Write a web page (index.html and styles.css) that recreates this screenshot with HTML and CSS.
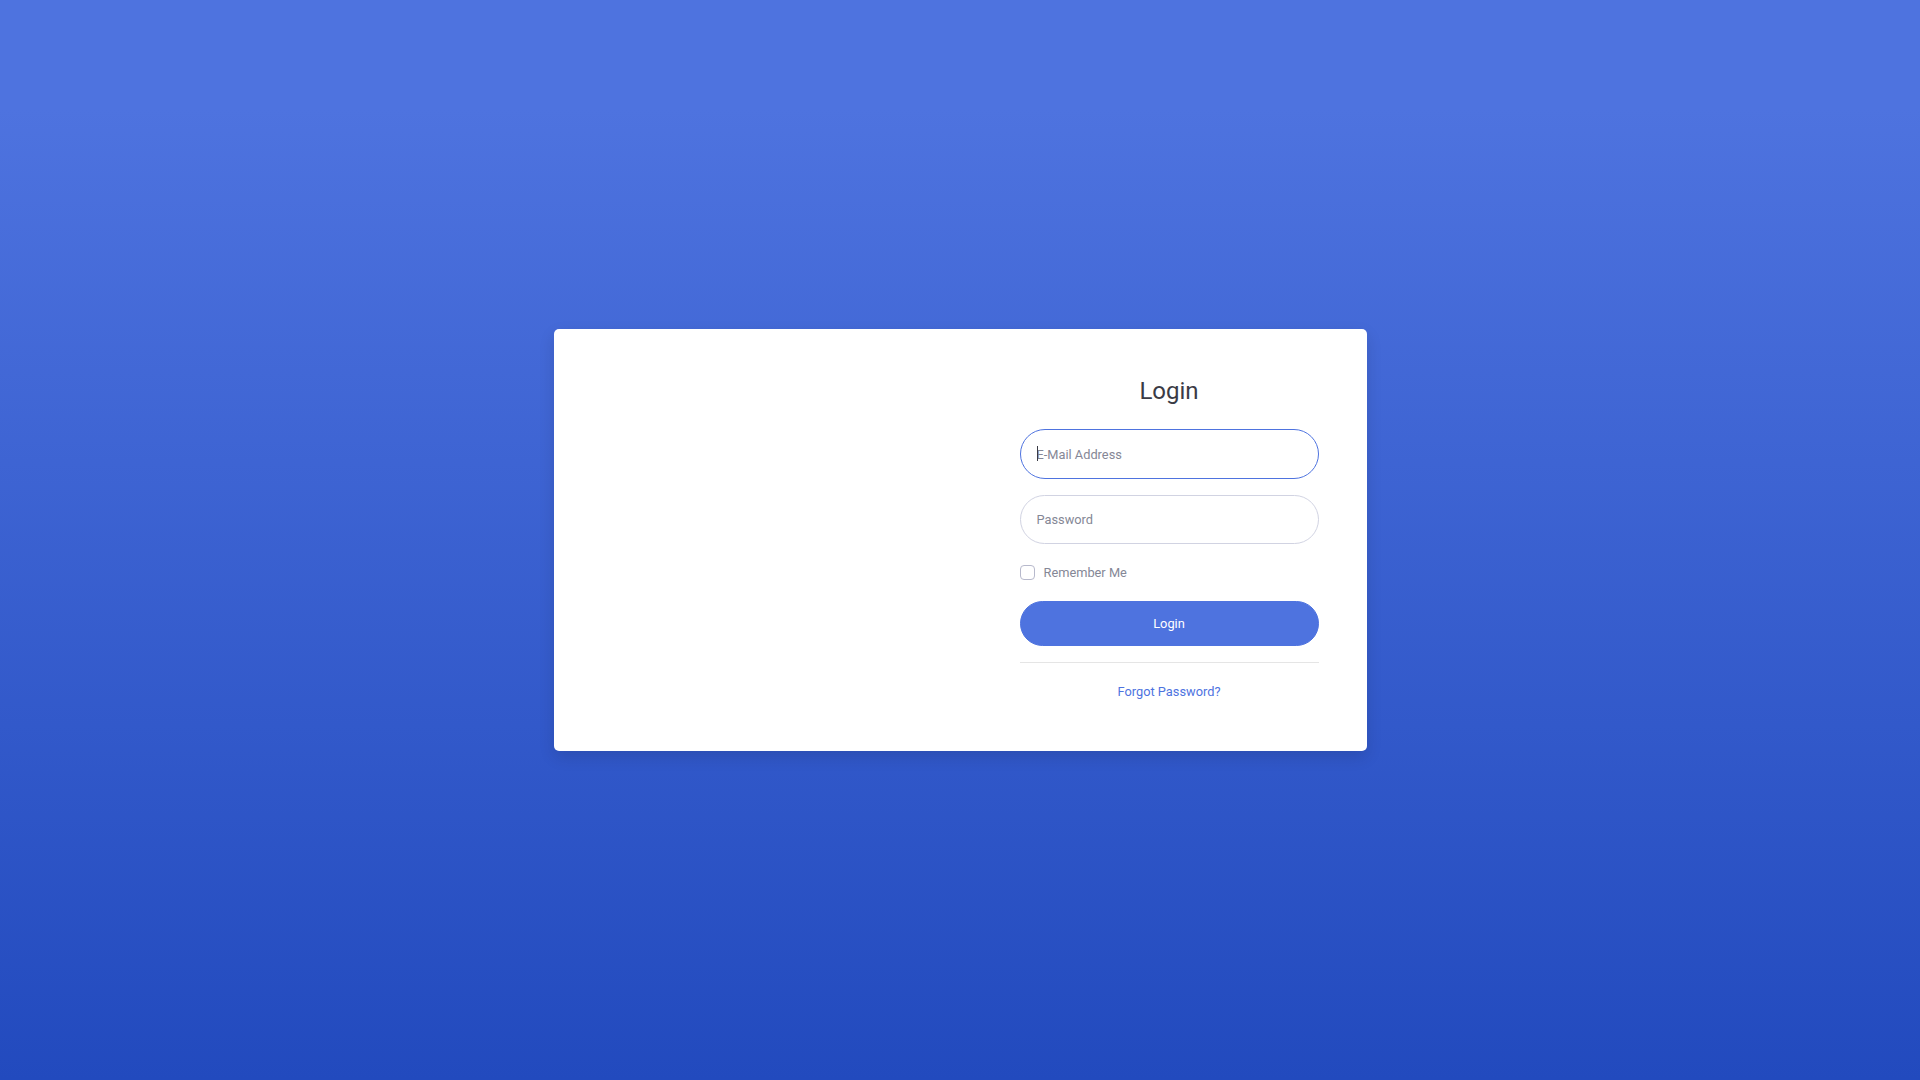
FILE: index.html
```html
<!DOCTYPE html>
<html lang="en">
<head>
<meta charset="utf-8">
<title>Login</title>
<link rel="stylesheet" href="styles.css">
</head>
<body>
<main class="page">
  <section class="card">
    <div class="card-image"></div>
    <div class="card-form">
      <h1 class="title">Login</h1>
      <form class="form">
        <div class="group field-wrap">
          <input class="field field-focus" type="email" placeholder="E-Mail Address">
          <span class="caret"></span>
        </div>
        <div class="group">
          <input class="field" type="password" placeholder="Password">
        </div>
        <div class="group check-row">
          <span class="check-box"></span>
          <span class="check-label">Remember Me</span>
        </div>
        <button type="button" class="btn">Login</button>
      </form>
      <hr class="divider">
      <div class="links">
        <a class="link" href="#">Forgot Password?</a>
      </div>
    </div>
  </section>
</main>
</body>
</html>
```

FILE: styles.css
```css
* { box-sizing: border-box; }
html, body { margin: 0; height: 100%; }
body {
  font-family: Roboto, "Liberation Sans", sans-serif;
  font-size: 16px;
  line-height: 1.5;
  color: #858796;
  background-color: #4e73df;
  background-image: linear-gradient(180deg, #4e73df 10%, #224abe 100%);
  min-height: 1080px;
}
.page {
  height: 1080px;
  display: flex;
  align-items: center;
  justify-content: center;
}
.card {
  width: 813px;
  background: #fff;
  border-radius: 5px;
  box-shadow: 0 6px 16px rgba(0, 0, 0, 0.12);
  display: grid;
  grid-template-columns: 1fr 395px;
  overflow: hidden;
}
.card-form {
  padding: 48px 48px 47.5px;
}
.title {
  margin: 0 0 24px;
  font-size: 24px;
  font-weight: 400;
  line-height: 1.2;
  color: #3a3b45;
  text-align: center;
}
.form { margin: 0; }
.group { margin-bottom: 16px; }
.field-wrap { position: relative; }
.field {
  display: block;
  width: 100%;
  height: 49.5px;
  padding: 0 16px;
  font-family: Roboto, "Liberation Sans", sans-serif;
  font-size: 12.8px;
  color: #6e707e;
  background: #fff;
  border: 1px solid #d1d3e2;
  border-radius: 160px;
  outline: none;
}
.field::placeholder { color: #858796; opacity: 1; }
.field-focus { border-color: #4e73df; }
.caret {
  position: absolute;
  left: 17px;
  top: 17px;
  width: 1px;
  height: 15px;
  background: #3a3b45;
}
.check-row {
  display: flex;
  align-items: center;
  height: 24px;
  margin-bottom: 16.5px;
}
.check-box {
  width: 15px;
  height: 15px;
  border: 1px solid #b7b9cc;
  border-radius: 4px;
  background: #fff;
  margin-right: 9px;
}
.check-label {
  font-size: 12.8px;
  color: #858796;
}
.btn {
  display: block;
  width: 100%;
  height: 45px;
  padding: 0 16px;
  font-family: Roboto, "Liberation Sans", sans-serif;
  font-size: 12.8px;
  color: #fff;
  background: #4e73df;
  border: 1px solid #4e73df;
  border-radius: 160px;
  cursor: pointer;
}
.divider {
  margin: 16px 0;
  border: 0;
  border-top: 1px solid rgba(0, 0, 0, 0.1);
}
.links {
  text-align: center;
  line-height: 24px;
}
.link {
  font-size: 12.8px;
  color: #4e73df;
  text-decoration: none;
}
```
